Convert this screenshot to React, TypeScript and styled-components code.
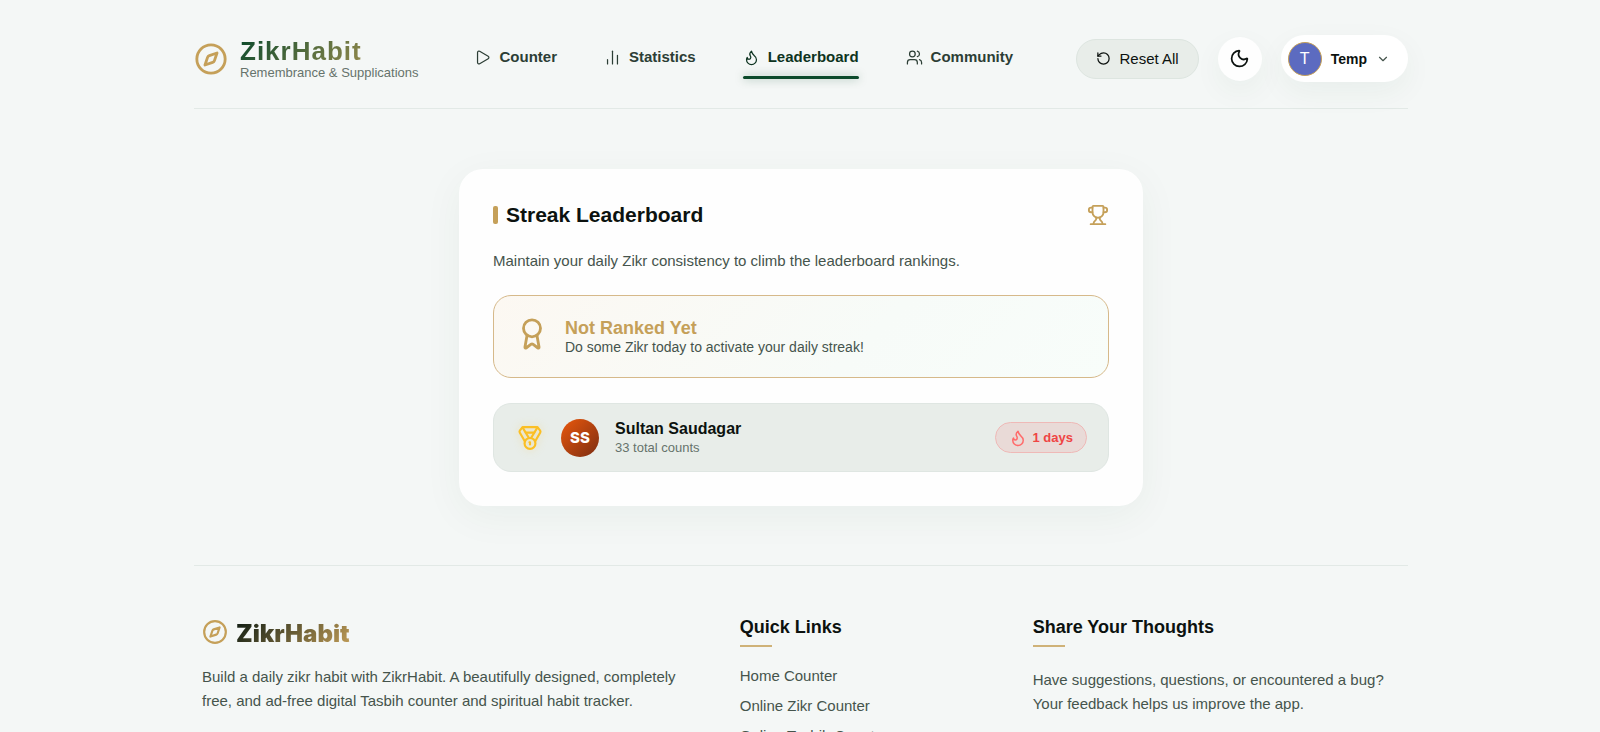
import React from "react";
import styled, { createGlobalStyle, css } from "styled-components";
import {
  Award,
  ChartNoAxesColumn,
  ChevronDown,
  Compass,
  Medal,
  Moon,
  Play,
  RotateCcw,
  Trophy,
  Users,
} from "lucide-react";

const color = {
  page: "#f4f7f6",
  card: "#fefefe",
  ink: "#0c120f",
  inkSoft: "#45544c",
  inkMuted: "#66736c",
  green: "#0b4a2b",
  gold: "#c5a059",
  sage: "#e8ede9",
  line: "#e2e9e6",
  red: "#ef4444",
};

const GlobalStyle = createGlobalStyle`
  *, *::before, *::after { box-sizing: border-box; }
  body {
    margin: 0;
    background: ${color.page};
    color: ${color.ink};
    font-family: "Liberation Sans", Arial, sans-serif;
    font-size: 15px;
  }
  h1, h2, h3, p, ul { margin: 0; padding: 0; }
  ul { list-style: none; }
  a { color: inherit; text-decoration: none; }
  button { font: inherit; color: inherit; cursor: pointer; }
  svg { display: block; flex-shrink: 0; }
`;

const Page = styled.div`
  max-width: 1248px;
  margin: 0 auto;
  padding: 10px 16px 0 18px;
`;

const Header = styled.header`
  display: flex;
  align-items: center;
  gap: 56px;
  padding: 25px 0 26px;
  border-bottom: 1px solid ${color.line};
`;

const Brand = styled.a`
  display: flex;
  align-items: center;
  gap: 12px;
  svg { color: ${color.gold}; }
`;

const BrandName = styled.h1`
  font-size: 26px;
  line-height: 28px;
  letter-spacing: 1px;
  background: linear-gradient(135deg, ${color.green}, ${color.gold});
  background-clip: text;
  color: transparent;
`;

const BrandTagline = styled.p`
  font-size: 13px;
  line-height: 16px;
  white-space: nowrap;
  color: ${color.inkMuted};
`;

const Nav = styled.nav`
  display: flex;
  gap: 47px;
`;

const NavLink = styled.a<{ $active?: boolean }>`
  display: flex;
  align-items: center;
  gap: 8px;
  padding: 10px 0;
  font-weight: bold;
  line-height: 24px;
  color: #2c3e35;
  border-bottom: 3px solid transparent;
  position: relative;
  ${(p) =>
    p.$active &&
    css`
      color: #0d3320;
      &::after {
        content: "";
        position: absolute;
        inset: auto 0 0;
        height: 3px;
        border-radius: 2px;
        background: ${color.green};
        box-shadow: 0 0 10px rgba(11, 74, 43, 0.4);
      }
    `}
`;

const Actions = styled.div`
  display: flex;
  align-items: center;
  gap: 19px;
  margin-left: auto;
`;

const softShadow = "0 10px 30px rgba(11, 74, 43, 0.05)";

const ResetButton = styled.button`
  display: flex;
  align-items: center;
  gap: 8px;
  height: 40px;
  padding: 0 19px;
  border: 1px solid #dde5e0;
  border-radius: 20px;
  background: ${color.sage};
  white-space: nowrap;
`;

const ThemeButton = styled.button`
  display: grid;
  place-items: center;
  width: 44px;
  height: 44px;
  padding: 0;
  border: 0;
  border-radius: 50%;
  background: ${color.card};
  box-shadow: ${softShadow};
`;

const UserButton = styled.button`
  display: flex;
  align-items: center;
  gap: 9px;
  height: 47px;
  padding: 0 18px 0 7px;
  border: 0;
  border-radius: 24px;
  background: #fff;
  box-shadow: ${softShadow};
  font-size: 14px;
  font-weight: bold;
  svg { color: ${color.inkSoft}; }
`;

const UserInitial = styled.span`
  display: grid;
  place-items: center;
  width: 34px;
  height: 34px;
  border: 1px solid ${color.gold};
  border-radius: 50%;
  background: #5c6bc0;
  color: #fff;
  font-size: 16px;
  font-weight: normal;
`;

const Main = styled.main`
  padding: 60px 0 59px;
`;

const Card = styled.section`
  max-width: 684px;
  margin: 0 auto;
  padding: 34px;
  border-radius: 24px;
  background: ${color.card};
  box-shadow: 0 10px 40px rgba(11, 74, 43, 0.05);
`;

const CardHead = styled.div`
  display: flex;
  align-items: center;
  justify-content: space-between;
  svg { color: ${color.gold}; }
`;

const CardTitle = styled.h2`
  display: flex;
  align-items: center;
  gap: 8px;
  font-size: 21px;
  line-height: 24px;
  &::before {
    content: "";
    width: 5px;
    height: 18px;
    border-radius: 2px;
    background: ${color.gold};
  }
`;

const CardText = styled.p`
  margin: 22px 0;
  line-height: 24px;
  color: ${color.inkSoft};
`;

const RankBanner = styled.div`
  display: flex;
  align-items: center;
  gap: 16px;
  height: 83px;
  padding: 0 21px;
  border: 1px solid #d6b98a;
  border-radius: 18px;
  background: linear-gradient(135deg, #fcf8f2, #f7fbf8 60%, #f8fdfa);
`;

const RankIcon = styled.span`
  padding-bottom: 5px;
  color: ${color.gold};
`;

const RankTitle = styled.h3`
  font-size: 18px;
  line-height: 20px;
  color: ${color.gold};
`;

const RankText = styled.p`
  font-size: 14px;
  line-height: 18px;
  color: ${color.inkSoft};
`;

const Leaders = styled.ul`
  margin-top: 25px;
`;

const Leader = styled.li`
  display: flex;
  align-items: center;
  gap: 16px;
  height: 69px;
  padding: 0 21px;
  border: 1px solid #dfe6e2;
  border-radius: 18px;
  background: ${color.sage};
`;

const MedalSlot = styled.span`
  display: grid;
  place-items: center;
  width: 30px;
  color: #fbbf24;
  filter: drop-shadow(0 0 4px rgba(251, 191, 36, 0.3));
`;

const LeaderAvatar = styled.span`
  display: grid;
  place-items: center;
  width: 38px;
  height: 38px;
  border-radius: 50%;
  background: linear-gradient(135deg, #ea580c, #7c2d12);
  color: #fff;
  font-family: Inter, "Liberation Sans", sans-serif;
  font-size: 15px;
  font-weight: 800;
`;

const LeaderInfo = styled.div`
  flex: 1;
`;

const LeaderName = styled.h3`
  font-size: 16px;
  line-height: 20px;
`;

const LeaderCount = styled.p`
  font-size: 13px;
  line-height: 18px;
  color: ${color.inkMuted};
`;

const StreakBadge = styled.span`
  display: flex;
  align-items: center;
  gap: 6px;
  height: 31px;
  padding: 0 13px;
  border: 1px solid #efb9b7;
  border-radius: 16px;
  background: #e9dad7;
  color: ${color.red};
  font-size: 13px;
  font-weight: bold;
  svg { color: #ff6b6b; }
`;

const Footer = styled.footer`
  display: grid;
  grid-template-columns: 2fr 1fr 1.5fr;
  gap: 48px;
  padding: 48px 8px;
  border-top: 1px solid ${color.line};
  color: ${color.inkSoft};
`;

const FooterBrand = styled.a`
  display: flex;
  align-items: flex-start;
  gap: 8px;
  margin: 5px 0 16px;
  svg { color: ${color.gold}; }
`;

const FooterBrandName = styled.span`
  font-family: Inter, "Liberation Sans", sans-serif;
  font-size: 24px;
  font-weight: 900;
  line-height: 30px;
  background: linear-gradient(135deg, #0c1a12, ${color.gold});
  background-clip: text;
  color: transparent;
`;

const FooterTitle = styled.h3`
  font-size: 18px;
  line-height: 26px;
  color: ${color.ink};
  &::after {
    content: "";
    display: block;
    width: 32px;
    height: 2px;
    margin-top: 5px;
    background: ${color.gold};
    opacity: 0.8;
  }
`;

const FooterText = styled.p`
  line-height: 24px;
`;

const Feedback = styled(FooterText)`
  margin-top: 21px;
`;

const FooterLinks = styled.ul`
  display: grid;
  gap: 6px;
  margin-top: 17px;
  line-height: 24px;
`;

type IconProps = { size?: number; strokeWidth?: number };

function Flame({ size = 24, strokeWidth = 2 }: IconProps) {
  return (
    <svg
      width={size}
      height={size}
      viewBox="0 0 24 24"
      fill="none"
      stroke="currentColor"
      strokeWidth={strokeWidth}
      strokeLinecap="round"
      strokeLinejoin="round"
      aria-hidden="true"
    >
      <path d="M8.5 14.5A2.5 2.5 0 0 0 11 12c0-1.38-.5-2-1-3-1.072-2.143-.224-4.054 2-6 .5 2.5 2 4.9 4 6.5 2 1.6 3 3.5 3 5.5a7 7 0 1 1-14 0c0-1.153.433-2.294 1-3a2.5 2.5 0 0 0 2.5 2.5z" />
    </svg>
  );
}

const navItems = [
  { label: "Counter", Icon: Play },
  { label: "Statistics", Icon: ChartNoAxesColumn },
  { label: "Leaderboard", Icon: Flame, active: true },
  { label: "Community", Icon: Users },
];

const quickLinks = ["Home Counter", "Online Zikr Counter", "Online Tasbih Counter"];

export default function App() {
  return (
    <>
      <GlobalStyle />
      <Page>
        <Header>
          <Brand href="#">
            <Compass size={34} />
            <div>
              <BrandName>ZikrHabit</BrandName>
              <BrandTagline>Remembrance &amp; Supplications</BrandTagline>
            </div>
          </Brand>
          <Nav>
            {navItems.map(({ label, Icon, active }) => (
              <NavLink key={label} href="#" $active={active}>
                <Icon size={17} strokeWidth={1.75} />
                {label}
              </NavLink>
            ))}
          </Nav>
          <Actions>
            <ResetButton type="button">
              <RotateCcw size={15} />
              Reset All
            </ResetButton>
            <ThemeButton type="button" aria-label="Dark mode">
              <Moon size={21} />
            </ThemeButton>
            <UserButton type="button">
              <UserInitial>T</UserInitial>
              Temp
              <ChevronDown size={14} />
            </UserButton>
          </Actions>
        </Header>

        <Main>
          <Card>
            <CardHead>
              <CardTitle>Streak Leaderboard</CardTitle>
              <Trophy size={22} />
            </CardHead>
            <CardText>
              Maintain your daily Zikr consistency to climb the leaderboard rankings.
            </CardText>
            <RankBanner>
              <RankIcon>
                <Award size={34} />
              </RankIcon>
              <div>
                <RankTitle>Not Ranked Yet</RankTitle>
                <RankText>Do some Zikr today to activate your daily streak!</RankText>
              </div>
            </RankBanner>
            <Leaders>
              <Leader>
                <MedalSlot>
                  <Medal size={26} />
                </MedalSlot>
                <LeaderAvatar>SS</LeaderAvatar>
                <LeaderInfo>
                  <LeaderName>Sultan Saudagar</LeaderName>
                  <LeaderCount>33 total counts</LeaderCount>
                </LeaderInfo>
                <StreakBadge>
                  <Flame size={18} />1 days
                </StreakBadge>
              </Leader>
            </Leaders>
          </Card>
        </Main>

        <Footer>
          <div>
            <FooterBrand href="#">
              <Compass size={26} />
              <FooterBrandName>ZikrHabit</FooterBrandName>
            </FooterBrand>
            <FooterText>
              Build a daily zikr habit with ZikrHabit. A beautifully designed, completely
              free, and ad-free digital Tasbih counter and spiritual habit tracker.
            </FooterText>
          </div>
          <div>
            <FooterTitle>Quick Links</FooterTitle>
            <FooterLinks>
              {quickLinks.map((label) => (
                <li key={label}>
                  <a href="#">{label}</a>
                </li>
              ))}
            </FooterLinks>
          </div>
          <div>
            <FooterTitle>Share Your Thoughts</FooterTitle>
            <Feedback>
              Have suggestions, questions, or encountered a bug? Your feedback helps us
              improve the app.
            </Feedback>
          </div>
        </Footer>
      </Page>
    </>
  );
}
